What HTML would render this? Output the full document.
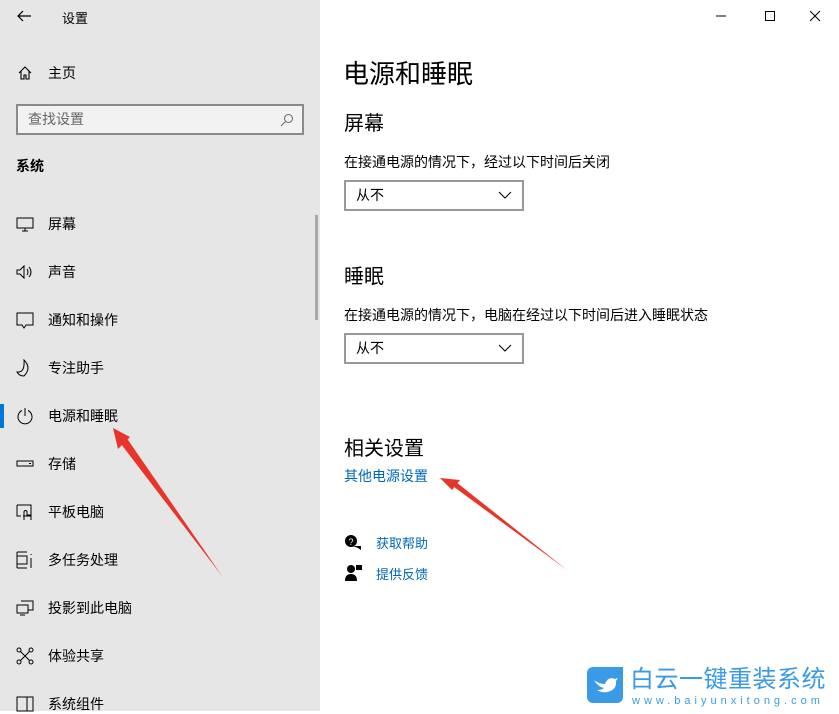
<!DOCTYPE html><html><head><meta charset="utf-8"><style>
*{margin:0;padding:0;box-sizing:border-box}
body{width:839px;height:711px;overflow:hidden;position:relative;background:#fff;font-family:"Liberation Sans","Noto Sans CJK SC",sans-serif;color:#000}
.side{position:absolute;left:0;top:0;width:320px;height:711px;background:#e6e6e6}
.a{position:absolute;white-space:nowrap}
.nav{position:absolute;left:48px;font-size:14px;line-height:20px}
.ic{position:absolute;left:16px;width:18px;height:18px}
.dd{position:absolute;left:344px;width:180px;height:31px;border:2px solid #999;background:#fff;font-size:14px;line-height:27px;padding-left:10px}
.dd svg{position:absolute;right:10px;top:9px}
</style></head><body>
<div class="side">
<svg class="a" style="left:16px;top:9px" width="16" height="14"><path d="M15 7H2M7 2L2 7l5 5" stroke="#000" fill="none" stroke-width="1.2"/></svg>
<div class="a" style="left:62px;top:8px;font-size:13px">设置</div>
<svg class="a" style="left:17px;top:65px" width="16" height="16"><path d="M2 8L8 2l6 6M4 6v8h3v-4h2v4h3V6" stroke="#000" fill="none" stroke-width="1.1"/></svg>
<div class="nav" style="top:63px">主页</div>
<div class="a" style="left:16px;top:104px;width:288px;height:31px;border:2px solid #8a8a8a;background:#f2f2f2;font-size:14px;line-height:27px;padding-left:10px;color:#666">查找设置
<svg style="position:absolute;right:8px;top:7px" width="14" height="14"><circle cx="8.5" cy="5.5" r="4" stroke="#666" fill="none"/><path d="M5.5 8.5L1 13" stroke="#666"/></svg></div>
<div class="a" style="left:16px;top:156px;font-size:14px;font-weight:bold">系统</div>
<div class="a" style="left:315px;top:215px;width:3px;height:105px;background:#a8a8a8"></div>
<div class="a" style="left:0;top:404px;width:4px;height:24px;background:#0078d7"></div>
<svg class="ic" style="top:215px" viewBox="0 0 18 18"><path d="M1 3h16v10H1zM9 13v3M6 16h6" stroke="#000" fill="none"/></svg><div class="nav" style="top:214px">屏幕</div>
<svg class="ic" style="top:263px" viewBox="0 0 18 18"><path d="M1 7h3l4-4v12l-4-4H1zM11 6q2 3 0 6M13 4q4 5 0 10" stroke="#000" fill="none"/></svg><div class="nav" style="top:262px">声音</div>
<svg class="ic" style="top:311px" viewBox="0 0 18 18"><path d="M1 2h16v12H10l-2 3-2-3H1z" stroke="#000" fill="none"/></svg><div class="nav" style="top:310px">通知和操作</div>
<svg class="ic" style="top:359px" viewBox="0 0 18 18"><path d="M8 1q8 8 0 16Q3 17 1 13q8 1 7-12z" stroke="#000" fill="none"/></svg><div class="nav" style="top:358px">专注助手</div>
<svg class="ic" style="top:407px" viewBox="0 0 18 18"><path d="M6 3.5A7 7 0 1 0 12 3.5M9 1v8" stroke="#000" fill="none"/></svg><div class="nav" style="top:406px">电源和睡眠</div>
<svg class="ic" style="top:455px" viewBox="0 0 18 18"><path d="M1 6h16v5H1zM13 8.5h2" stroke="#000" fill="none"/></svg><div class="nav" style="top:454px">存储</div>
<svg class="ic" style="top:503px" viewBox="0 0 18 18"><path d="M1 2h14v11H7M1 2v11h4M8 17v-8a1.5 1.5 0 0 1 3 0v3h4v5" stroke="#000" fill="none"/></svg><div class="nav" style="top:502px">平板电脑</div>
<svg class="ic" style="top:551px" viewBox="0 0 18 18"><path d="M1 1v16M1 5h10v8H1M1 17h10M1 1h10M15 3v1M15 7v10" stroke="#000" fill="none"/></svg><div class="nav" style="top:550px">多任务处理</div>
<svg class="ic" style="top:599px" viewBox="0 0 18 18"><path d="M5 2h12v9H12M1 6h11v8H1zM4 16h5" stroke="#000" fill="none"/></svg><div class="nav" style="top:598px">投影到此电脑</div>
<svg class="ic" style="top:647px" viewBox="0 0 18 18"><circle cx="3" cy="3" r="2" stroke="#000" fill="none"/><circle cx="15" cy="3" r="2" stroke="#000" fill="none"/><circle cx="3" cy="15" r="2" stroke="#000" fill="none"/><circle cx="15" cy="15" r="2" stroke="#000" fill="none"/><path d="M4.5 4.5l9 9M13.5 4.5l-9 9" stroke="#000"/></svg><div class="nav" style="top:646px">体验共享</div>
<svg class="ic" style="top:695px" viewBox="0 0 18 18"><path d="M1 2h16v14H1zM11 2v14" stroke="#000" fill="none"/></svg><div class="nav" style="top:694px">系统组件</div>
</div>
<svg class="a" style="left:714px;top:8px" width="120" height="16"><path d="M2 8h10" stroke="#000"/><rect x="51.5" y="3.5" width="9" height="9" stroke="#000" fill="none"/><path d="M96 3l10 10M106 3L96 13" stroke="#000"/></svg>
<div class="a" style="left:343px;top:54px;font-size:26px">电源和睡眠</div>
<div class="a" style="left:344px;top:107px;font-size:20px">屏幕</div>
<div class="a" style="left:344px;top:152px;font-size:14px">在接通电源的情况下，经过以下时间后关闭</div>
<div class="dd" style="top:180px">从不<svg width="14" height="8"><path d="M1 1l6 6 6-6" stroke="#000" fill="none"/></svg></div>
<div class="a" style="left:344px;top:260px;font-size:20px">睡眠</div>
<div class="a" style="left:344px;top:305px;font-size:14px">在接通电源的情况下，电脑在经过以下时间后进入睡眠状态</div>
<div class="dd" style="top:333px">从不<svg width="14" height="8"><path d="M1 1l6 6 6-6" stroke="#000" fill="none"/></svg></div>
<div class="a" style="left:344px;top:432px;font-size:20px">相关设置</div>
<div class="a" style="left:344px;top:466px;font-size:14px;color:#0067b8">其他电源设置</div>
<svg class="a" style="left:344px;top:534px" width="18" height="16"><circle cx="7" cy="7" r="6" fill="#000"/><path d="M9 12h8v4l-3-2" fill="#000"/><text x="4.5" y="11" font-size="9" fill="#fff">?</text></svg>
<div class="a" style="left:376px;top:533px;font-size:13px;color:#0067b8">获取帮助</div>
<svg class="a" style="left:344px;top:564px" width="18" height="18"><circle cx="7" cy="5" r="4" fill="#000"/><path d="M1 17q0-7 6-7t6 7z" fill="#000"/><path d="M12 1h6v5h-6z" fill="#000"/></svg>
<div class="a" style="left:376px;top:564px;font-size:13px;color:#0067b8">提供反馈</div>
<svg class="a" style="left:0;top:0" width="839" height="711"><g fill="#e8352a"><polygon points="222,576 121,444 113,428 128,440"/><polygon points="113,428 130,437 118,449"/><polygon points="567,570 450,484 440,478 456,482"/><polygon points="440,478 460,480 452,490"/></g></svg>
<svg class="a" style="left:587px;top:667px" width="36" height="36"><path d="M6 0h30v30a6 6 0 0 1-6 6H6a6 6 0 0 1-6-6V6a6 6 0 0 1 6-6z" fill="#3a9ae6"/><path d="M7 13q5 4 11 4 3-8 10-5l3-1-2 3q1 9-9 11-5 1-10-2 5 0 7-2-6-1-10-8z" fill="#fff"/></svg>
<div class="a" style="left:630px;top:666px;font-size:24px;color:#3a9ae6;letter-spacing:0.5px;line-height:28px">白云一键重装系统</div>
<div class="a" style="left:632px;top:695px;font-size:11px;color:#3a9ae6;letter-spacing:4px;line-height:12px">www.baiyunxitong.com</div>
</body></html>
